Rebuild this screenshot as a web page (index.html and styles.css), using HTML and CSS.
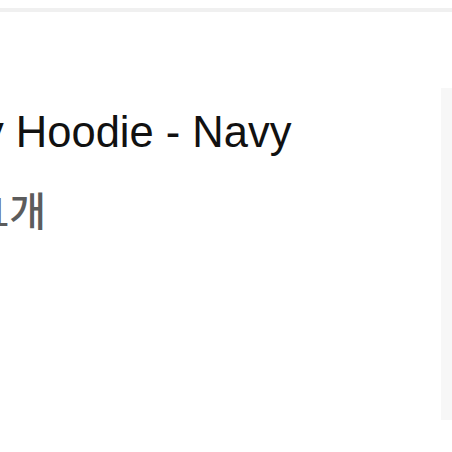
FILE: index.html
```html
<!DOCTYPE html>
<html lang="ko">
<head>
    <meta charset="UTF-8">
    <meta name="viewport" content="width=device-width, initial-scale=1.0">
    <title>Cart</title>
    <link rel="stylesheet" href="styles.css">
</head>
<body>
    <div class="topbar"></div>
    <div class="cart">
        <div class="item-info">
            <h2 class="item-name">y Hoodie - Navy</h2>
            <p class="item-qty">1개</p>
        </div>
        <aside class="summary"></aside>
    </div>
</body>
</html>
```

FILE: styles.css
```css
body {
    margin: 0;
    padding-top: 8px;
    overflow: hidden;
    background: #fff;
    font-family: "Liberation Sans", Arial, sans-serif;
    color: #111;
}
.topbar {
    height: 4px;
    background-color: #f0f0f0;
}
.cart {
    display: flex;
    margin-top: 76px;
    height: 332px;
}
.item-info {
    flex: 1;
    min-width: 0;
    padding-top: 19px;
}
.item-name {
    margin: 0 0 0 -18px;
    font-size: 43.5px;
    font-weight: normal;
    line-height: 50px;
    white-space: nowrap;
}
.item-qty {
    margin: 31px 0 0 -13px;
    font-family: "Liberation Sans", "Noto Sans CJK KR", sans-serif;
    font-size: 40px;
    font-weight: 500;
    line-height: 48px;
    color: #5c5c5c;
}
.summary {
    flex: 0 0 11px;
    background-color: #f7f7f7;
}
```
